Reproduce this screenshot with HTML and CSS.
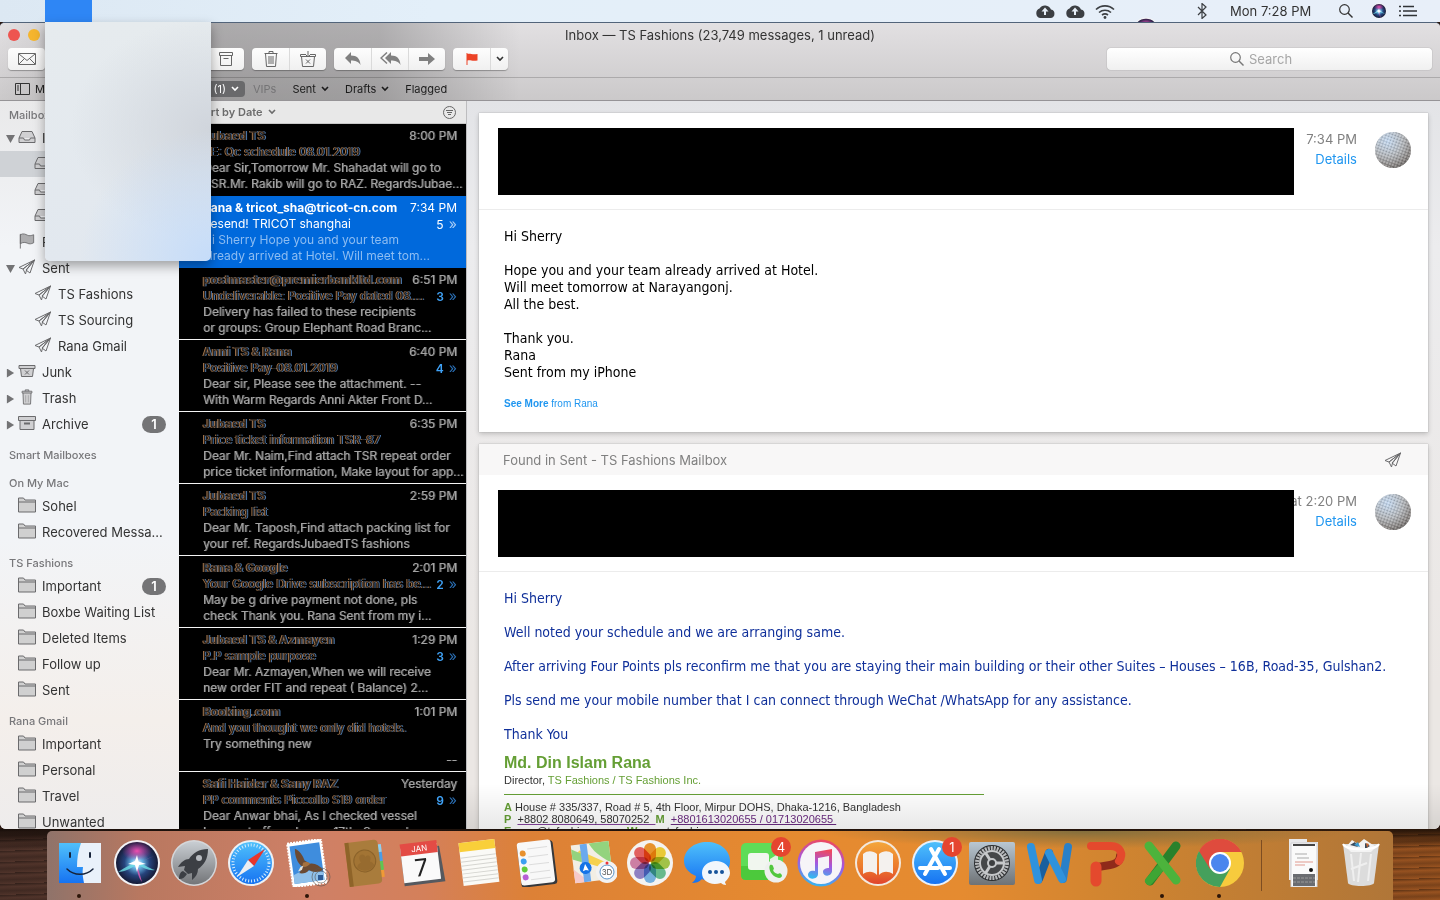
FILE: index.html
```html
<!DOCTYPE html>
<html lang="en">
  <head>
    <meta charset="UTF-8" />
    <meta name="viewport" content="width=device-width, initial-scale=1.0" />
    <title>Inbox — TS Fashions</title>
    <link rel="stylesheet" href="styles.css">
  </head>
  <body>
    <!-- Shared icons -->
    <svg class="sprite" aria-hidden="true">
      <defs>
        <linearGradient id="g-blue" x1="0" y1="0" x2="0" y2="1"><stop offset="0" stop-color="#4fc0fb" /><stop offset="1" stop-color="#1673f2" /></linearGradient>
        <linearGradient id="g-silver" x1="0" y1="0" x2="0" y2="1"><stop offset="0" stop-color="#c9ced3" /><stop offset="1" stop-color="#737578" /></linearGradient>
        <linearGradient id="g-orange" x1="0" y1="0" x2="0" y2="1"><stop offset="0" stop-color="#f3a63a" /><stop offset=".6" stop-color="#ec7a2c" /><stop offset="1" stop-color="#e0442c" /></linearGradient>
        <linearGradient id="g-note" x1=".6" y1="0" x2=".4" y2="1"><stop offset="0" stop-color="#f0485c" /><stop offset=".5" stop-color="#a457e0" /><stop offset="1" stop-color="#35b6f0" /></linearGradient>
        <linearGradient id="g-gear" x1="0" y1="0" x2="0" y2="1"><stop offset="0" stop-color="#b9c7d2" /><stop offset="1" stop-color="#6e7275" /></linearGradient>
        <radialGradient id="g-siri" cx=".5" cy=".5" r=".5"><stop offset="0" stop-color="#fff" /><stop offset=".25" stop-color="#69b7e6" /><stop offset=".6" stop-color="#26437c" /><stop offset="1" stop-color="#161a35" /></radialGradient>
        <radialGradient id="g-pink" cx=".5" cy=".5" r=".5"><stop offset="0" stop-color="#f04fb0" /><stop offset="1" stop-color="#c02f8c" stop-opacity="0" /></radialGradient>
        <radialGradient id="g-ball" cx=".35" cy=".25" r=".85"><stop offset="0" stop-color="#c3daf4" /><stop offset=".5" stop-color="#b0b4b9" /><stop offset=".8" stop-color="#85817f" /><stop offset="1" stop-color="#4f4b49" /></radialGradient>
        <pattern id="dimples" width="3" height="3" patternUnits="userSpaceOnUse" patternTransform="rotate(20)">
          <circle cx="1" cy="1" r=".9" fill="#fff" fill-opacity=".4" /><circle cx="2.200" cy="2.200" r=".8" fill="#333" fill-opacity=".35" />
        </pattern>
      </defs>
      <symbol id="i-tray" viewBox="0 0 18 14"><path d="M1 8l3-6.500h10L17 8v4.500H1zM1 8h4.500l1 2h5l1-2H17" fill="#d0d0d2" stroke="#6b6b6d" stroke-linejoin="round" /></symbol>
      <symbol id="i-flag" viewBox="0 0 18 18"><path d="M1.500 1v16.500M1.500 2c3-2 6-.500 8 .500s4 .500 7-.500v9c-3 1.500-5 1.500-7 .500s-5-1.500-8 .500z" fill="#adadaf" stroke="#6b6b6d" /></symbol>
      <symbol id="i-plane" viewBox="0 0 18 16"><path d="M16.500 1L1 8.500l4 1.500zM16.500 1L12 14l-4-3zM16.500 1L5 10l2.500 5L8.500 11z" fill="none" stroke="#6b6b6d" stroke-linejoin="round" /></symbol>
      <symbol id="i-junk" viewBox="0 0 18 14"><path d="M1 1.500h16v3H1zM2.500 4.500l1 8h11l1-8" fill="#d0d0d2" stroke="#6b6b6d" /><path d="M7 6.500l4 4M11 6.500l-4 4" stroke="#6b6b6d" /></symbol>
      <symbol id="i-trash" viewBox="0 0 14 18"><path d="M5 2.500v-1.500h4v1.500M1.500 2.500h11v2h-11zM2.500 4.500l.5 12.500h8l.5-12.500" fill="#d0d0d2" stroke="#6b6b6d" stroke-linejoin="round" /><path d="M5.500 7v8M8.500 7v8" stroke="#a5a5a7" /></symbol>
      <symbol id="i-archive" viewBox="0 0 18 14"><path d="M2 4.500h14v9H2zM.5.500h17v4H.5z" fill="#d0d0d2" stroke="#6b6b6d" /><path d="M6 7.500h6" stroke="#6b6b6d" stroke-width="2" /></symbol>
      <symbol id="i-folder" viewBox="0 0 18 15"><path d="M.5 14.500V.5h5l1.500 2h10.500v12zM.5 4.500h17" fill="#d0d0d0" stroke="#6b6b6d" /></symbol>
      <symbol id="i-chev" viewBox="0 0 8 6"><path d="M1 1l3 3 3-3" fill="none" stroke="currentColor" stroke-width="1.600" /></symbol>
      <symbol id="i-cloud" viewBox="0 0 20 14"><path d="M5 14a5 5 0 0 1-.5-9.500A6.500 6.500 0 0 1 16 5.500a4.300 4.300 0 0 1-.500 8.500z" fill="#3c3f43" /><path d="M10 3.500L6.500 7.500H9v3.500h2V7.500h2.500z" fill="#e8f0f8" /></symbol>
      <symbol id="i-search" viewBox="0 0 14 14"><circle cx="5.500" cy="5.500" r="4.800" fill="none" stroke="currentColor" stroke-width="1.200" /><path d="M9 9l4.500 4.500" stroke="currentColor" stroke-width="1.400" /></symbol>
      <symbol id="i-siri" viewBox="0 0 48 48">
        <circle cx="24" cy="24" r="23" fill="#f3f3f6" /><circle cx="24" cy="24" r="21" fill="url(#g-siri)" />
        <ellipse cx="24" cy="12" rx="15" ry="10" fill="url(#g-pink)" />
        <path d="M5 33c8-5 14-9 19-9 6 0 11 5 18 7-6 1-12-2-18-6-5 4-12 8-19 8z" fill="#6ee0e6" opacity=".8" />
        <path d="M41 17c-7 3-12 5-17 8l5 18c-4-5-5-12-6-18z" fill="#e65ab4" opacity=".8" />
        <path d="M24 16l1.500 6.500L33 25l-7 1-2 7-2-7-7-1 7-3z" fill="#fff" />
      </symbol>
      <symbol id="i-ball" viewBox="0 0 36 36"><circle cx="18" cy="18" r="18" fill="url(#g-ball)" /><circle cx="18" cy="18" r="18" fill="url(#dimples)" /></symbol>
    </svg>

    <!-- Menu bar -->
    <header class="menubar">
      <button class="menu-open" type="button" aria-label="Menu"></button>
      <div class="status">
        <svg class="st-cloud"><use href="#i-cloud" /></svg>
        <svg class="st-cloud"><use href="#i-cloud" /></svg>
        <svg class="st-wifi" viewBox="0 0 20 15"><path d="M1 5.500a13 13 0 0 1 18 0M4 8.500a9 9 0 0 1 12 0M7 11a5 5 0 0 1 6 0" fill="none" stroke="#3c3f43" stroke-width="1.600" /><circle cx="10" cy="13.500" r="1.400" fill="#3c3f43" /></svg>
        <svg class="st-rising"><use href="#i-siri" /></svg>
        <svg class="st-bt" viewBox="0 0 11 16"><path d="M1 4l8 8-4 3.500V.5L9 4l-8 8" fill="none" stroke="#3c3f43" stroke-width="1.200" /></svg>
        <time class="clock">Mon 7:28 PM</time>
        <svg class="st-search"><use href="#i-search" /></svg>
        <svg class="st-siri"><use href="#i-siri" /></svg>
        <svg class="st-list" viewBox="0 0 18 12"><path d="M0 1.500h2M4 1.500h11M0 6h2M4 6h14M0 10.500h2M4 10.500h14" stroke="#2f3236" stroke-width="1.600" /></svg>
      </div>
    </header>
    <div class="dropdown"></div>

    <!-- Mail window -->
    <main class="window">
      <div class="chrome">
        <div class="titlebar">
          <button class="light red" type="button" aria-label="Close"></button>
          <button class="light amber" type="button" aria-label="Minimize"></button>
          <h1>Inbox — TS Fashions (23,749 messages, 1 unread)</h1>
        </div>
        <div class="toolbar">
          <div class="tool-left">
            <div class="group"><button type="button" aria-label="Get mail"><svg width="18" height="12" viewBox="0 0 18 12"><path d="M.5.500h17v11H.5zM1 1l8 6.500L17 1M1 11l5.500-5.500M17 11l-5.500-5.500" fill="none" stroke="#666" /></svg></button></div>
            <div class="group"><button type="button" aria-label="Archive"><svg width="14" height="14" viewBox="0 0 14 14"><path d="M.5.500h13v3H.5zM1.500 3.500v10h11v-10M4.500 6.500h5" fill="none" stroke="#666" /></svg></button></div>
          </div>
          <div class="group">
            <button type="button" aria-label="Delete"><svg width="14" height="16" viewBox="0 0 14 16"><path d="M5 2.500V.5h4v2M.5 2.500h13M1.500 2.500l1 13h9l1-13M5 5v8M7 5v8M9 5v8" fill="none" stroke="#666" /></svg></button>
            <button type="button" aria-label="Junk"><svg width="16" height="16" viewBox="0 0 16 16"><path d="M6 3.500H.5v2h15v-2H10M1.500 5.500l1 10h11l1-10M8 0v6M6 4l2 2 2-2M6 8.500l4 4M10 8.500l-4 4" fill="none" stroke="#666" /></svg></button>
          </div>
          <div class="group">
            <button type="button" aria-label="Reply"><svg width="16" height="13" viewBox="0 0 16 13"><path d="M6 0v3.500c6 0 9 3 9.500 9.500C13.500 9.500 10 8.500 6 8.500V12L0 6z" fill="#808080" /></svg></button>
            <button type="button" aria-label="Reply all"><svg width="21" height="13" viewBox="0 0 21 13"><path d="M11 0v3.500c6 0 9 3 9.500 9.500-2-3.500-5.500-4.500-9.500-4.500V12L5 6z" fill="#808080" /><path d="M7 .5L1 6l6 5.500" fill="none" stroke="#808080" stroke-width="1.500" /></svg></button>
            <button type="button" aria-label="Forward"><svg width="16" height="12" viewBox="0 0 16 12"><path d="M9 0v4H0v4h9v4l7-6z" fill="#808080" /></svg></button>
          </div>
          <div class="group flagger">
            <button type="button" aria-label="Flag"><svg width="12" height="12" viewBox="0 0 12 12"><path d="M.5 0h1v1c3-1 4 1 10 0v6.500c-6 1-7-1-10 0V12h-1z" fill="#ec4327" /></svg></button>
            <button type="button" aria-label="Flag colour"><svg width="8" height="6"><use href="#i-chev" /></svg></button>
          </div>
          <label class="search">
            <svg width="14" height="14"><use href="#i-search" /></svg>
            <input type="search" placeholder="Search" aria-label="Search" />
          </label>
        </div>
        <nav class="favorites">
          <div class="fav-left">
            <a href="#"><svg width="15" height="12" viewBox="0 0 15 12"><path d="M.5.500h14v11H.5zM5.500.500v11M2 3h2M2 5h2M2 7h2" fill="none" stroke="#333" /></svg> Mailboxes</a>
            <a class="active" href="#">Inbox (1) <svg width="8" height="6"><use href="#i-chev" /></svg></a>
          </div>
          <a class="dim" href="#">VIPs</a>
          <a href="#">Sent <svg width="8" height="6"><use href="#i-chev" /></svg></a>
          <a href="#">Drafts <svg width="8" height="6"><use href="#i-chev" /></svg></a>
          <a href="#">Flagged</a>
        </nav>
      </div>

      <div class="panes">
        <nav class="sidebar">
          <h2>Mailboxes</h2>
          <a class="top open" href="#"><svg><use href="#i-tray" /></svg>Inbox</a>
          <a class="sub selected" href="#"><svg><use href="#i-tray" /></svg>TS Fashions</a>
          <a class="sub" href="#"><svg><use href="#i-tray" /></svg>TS Sourcing</a>
          <a class="sub" href="#"><svg><use href="#i-tray" /></svg>Rana Gmail</a>
          <a class="top" href="#"><svg><use href="#i-flag" /></svg>Flagged</a>
          <a class="top open" href="#"><svg><use href="#i-plane" /></svg>Sent</a>
          <a class="sub" href="#"><svg><use href="#i-plane" /></svg>TS Fashions</a>
          <a class="sub" href="#"><svg><use href="#i-plane" /></svg>TS Sourcing</a>
          <a class="sub" href="#"><svg><use href="#i-plane" /></svg>Rana Gmail</a>
          <a class="top shut" href="#"><svg><use href="#i-junk" /></svg>Junk</a>
          <a class="top shut" href="#"><svg><use href="#i-trash" /></svg>Trash</a>
          <a class="top shut" href="#"><svg><use href="#i-archive" /></svg>Archive<span class="count">1</span></a>
          <h2>Smart Mailboxes</h2>
          <h2>On My Mac</h2>
          <a class="top" href="#"><svg><use href="#i-folder" /></svg>Sohel</a>
          <a class="top" href="#"><svg><use href="#i-folder" /></svg>Recovered Messa...</a>
          <h2>TS Fashions</h2>
          <a class="top" href="#"><svg><use href="#i-folder" /></svg>Important<span class="count">1</span></a>
          <a class="top" href="#"><svg><use href="#i-folder" /></svg>Boxbe Waiting List</a>
          <a class="top" href="#"><svg><use href="#i-folder" /></svg>Deleted Items</a>
          <a class="top" href="#"><svg><use href="#i-folder" /></svg>Follow up</a>
          <a class="top" href="#"><svg><use href="#i-folder" /></svg>Sent</a>
          <h2>Rana Gmail</h2>
          <a class="top" href="#"><svg><use href="#i-folder" /></svg>Important</a>
          <a class="top" href="#"><svg><use href="#i-folder" /></svg>Personal</a>
          <a class="top" href="#"><svg><use href="#i-folder" /></svg>Travel</a>
          <a class="top" href="#"><svg><use href="#i-folder" /></svg>Unwanted</a>
        </nav>

        <section class="list">
          <div class="sort">
            <button type="button">Sort by Date <svg width="8" height="6"><use href="#i-chev" /></svg></button>
            <button type="button" aria-label="Filter"><svg width="13" height="13" viewBox="0 0 13 13"><circle cx="6.500" cy="6.500" r="6" fill="none" stroke="#666" /><path d="M3 4.500h7M4 6.500h5M5 8.500h3" stroke="#666" /></svg></button>
          </div>
          <ul class="messages">
            <li>
              <div class="row"><b class="from">Jubaed TS</b><time>8:00 PM</time></div>
              <div class="row"><span class="subject">RE: Qc schedule 08.01.2019</span></div>
              <p>Dear Sir,Tomorrow Mr. Shahadat will go to<br>TSR.Mr. Rakib will go to RAZ. RegardsJubae...</p>
            </li>
            <li class="current">
              <div class="row"><b class="from">Rana &amp; tricot_sha@tricot-cn.com</b><time>7:34 PM</time></div>
              <div class="row"><span class="subject">Resend! TRICOT shanghai</span><span class="thread">5 <i>»</i></span></div>
              <p>Hi Sherry Hope you and your team<br>already arrived at Hotel. Will meet tom...</p>
            </li>
            <li>
              <div class="row"><b class="from">postmaster@premierbankltd.com</b><time>6:51 PM</time></div>
              <div class="row"><span class="subject">Undeliverable: Positive Pay dated 08....</span><span class="thread">3 <i>»</i></span></div>
              <p>Delivery has failed to these recipients<br>or groups: Group Elephant Road Branc...</p>
            </li>
            <li>
              <div class="row"><b class="from">Anni TS &amp; Rana</b><time>6:40 PM</time></div>
              <div class="row"><span class="subject">Positive Pay-08.01.2019</span><span class="thread">4 <i>»</i></span></div>
              <p>Dear sir, Please see the attachment. --<br>With Warm Regards Anni Akter Front D...</p>
            </li>
            <li>
              <div class="row"><b class="from">Jubaed TS</b><time>6:35 PM</time></div>
              <div class="row"><span class="subject">Price ticket information TSR-87</span></div>
              <p>Dear Mr. Naim,Find attach TSR repeat order<br>price ticket information, Make layout for app...</p>
            </li>
            <li>
              <div class="row"><b class="from">Jubaed TS</b><time>2:59 PM</time></div>
              <div class="row"><span class="subject">Packing list</span></div>
              <p>Dear Mr. Taposh,Find attach packing list for<br>your ref. RegardsJubaedTS fashions</p>
            </li>
            <li>
              <div class="row"><b class="from">Rana &amp; Google</b><time>2:01 PM</time></div>
              <div class="row"><span class="subject">Your Google Drive subscription has be...</span><span class="thread">2 <i>»</i></span></div>
              <p>May be g drive payment not done, pls<br>check Thank you. Rana Sent from my i...</p>
            </li>
            <li>
              <div class="row"><b class="from">Jubaed TS &amp; Azmayen</b><time>1:29 PM</time></div>
              <div class="row"><span class="subject">P.P sample purpose</span><span class="thread">3 <i>»</i></span></div>
              <p>Dear Mr. Azmayen,When we will receive<br>new order FIT and repeat ( Balance) 2...</p>
            </li>
            <li>
              <div class="row"><b class="from">Booking.com</b><time>1:01 PM</time></div>
              <div class="row"><span class="subject">And you thought we only did hotels.</span></div>
              <p>Try something new</p>
              <p class="tail">--</p>
            </li>
            <li>
              <div class="row"><b class="from">Safi Haider &amp; Sany RAZ</b><time>Yesterday</time></div>
              <div class="row"><span class="subject">PP comments Piccollo S19 order</span><span class="thread">9 <i>»</i></span></div>
              <p>Dear Anwar bhai, As I checked vessel<br>have cut off on Jan on 17th, So we do</p>
            </li>
          </ul>
        </section>

        <section class="reader">
          <article class="card">
            <div class="card-head">
              <div class="redacted"></div>
              <div class="meta"><time>7:34 PM</time><a href="#">Details</a></div>
              <svg class="avatar"><use href="#i-ball" /></svg>
            </div>
            <div class="mail">
              <p>Hi Sherry</p>
              <p>Hope you and your team already arrived at Hotel.<br>Will meet tomorrow at Narayangonj.<br>All the best.</p>
              <p>Thank you.<br>Rana<br>Sent from my iPhone</p>
              <a class="more" href="#"><b>See More</b> from Rana</a>
            </div>
          </article>

          <article class="card">
            <div class="found">Found in Sent - TS Fashions Mailbox <svg width="18" height="16"><use href="#i-plane" /></svg></div>
            <div class="card-head">
              <div class="redacted"></div>
              <div class="meta"><time>at 2:20 PM</time><a href="#">Details</a></div>
              <svg class="avatar"><use href="#i-ball" /></svg>
            </div>
            <div class="mail navy">
              <p>Hi Sherry</p>
              <p>Well noted your schedule and we are arranging same.</p>
              <p>After arriving Four Points pls reconfirm me that you are staying their main building or their other Suites – Houses – 16B, Road-35, Gulshan2.</p>
              <p>Pls send me your mobile number that I can connect through WeChat /WhatsApp for any assistance.</p>
              <p>Thank You</p>
              <div class="signature">
                <h3>Md. Din Islam Rana</h3>
                <div class="role">Director, <span>TS Fashions / TS Fashions Inc.</span></div>
                <div class="address"><b>A</b> House # 335/337, Road # 5, 4th Floor, Mirpur DOHS, Dhaka-1216, Bangladesh</div>
                <div><b>P</b>&nbsp; <u>+8802 8080649, 58070252&nbsp;&nbsp;</u><b>M</b>&nbsp; <a href="#">+8801613020655 / 01713020655&nbsp;</a></div>
                <div><b>E</b> rana@tsfashions.com&nbsp; <b>W</b> www.tsfashions.com</div>
              </div>
            </div>
          </article>
        </section>
      </div>
    </main>

    <!-- Dock -->
    <footer class="desktop">
      <nav class="dock">
        <button class="app running" type="button" aria-label="Finder"><svg viewBox="0 0 48 48"><path d="M3 4h42v40H3z" fill="url(#g-blue)" /><path d="M25 4h20v40H28c-1-5-2-10-1-16h-6c0-8 1-16 4-24z" fill="#e9f1fa" /><path d="M14 14v4M34 14v4" stroke="#16233a" stroke-width="2" stroke-linecap="round" /><path d="M11 30c7 7 19 7 26 0" fill="none" stroke="#16233a" stroke-width="1.500" stroke-linecap="round" /></svg></button>
        <button class="app" type="button" aria-label="Siri"><svg><use href="#i-siri" /></svg></button>
        <button class="app" type="button" aria-label="Launchpad"><svg viewBox="0 0 48 48"><circle cx="24" cy="24" r="23" fill="#d5d7da" /><circle cx="24" cy="24" r="21.500" fill="url(#g-silver)" /><path d="M38 10c-9 0-15 4-19 10-4 0-8 3-11 8l7-1-1 4 4 4 4-1 0 7c4-3 6-7 6-11 6-4 10-10 10-20z" fill="#3c3f44" /><circle cx="29" cy="19" r="3" fill="#b9bdc2" /><path d="M13 32c-3 1-4 4-4 8 4 0 6-2 8-5z" fill="#3c3f44" /></svg></button>
        <button class="app" type="button" aria-label="Safari"><svg viewBox="0 0 48 48"><circle cx="24" cy="24" r="23" fill="#eef1f4" /><circle cx="24" cy="24" r="21" fill="url(#g-blue)" /><circle cx="24" cy="24" r="18" fill="none" stroke="#d6ecfb" stroke-width="3" stroke-dasharray="1 2" /><path d="M38 10L21 21l6 6z" fill="#e6362d" /><path d="M10 38l11-17 6 6z" fill="#eceef2" /></svg></button>
        <button class="app running" type="button" aria-label="Mail"><svg viewBox="0 0 48 48"><g transform="rotate(-8 24 24)"><path d="M6 2h34v44H6z" fill="#fff" stroke="#fff" stroke-width="2" stroke-dasharray="2 1" /><path d="M8 5h30v38H8z" fill="#3f8ddd" /><path d="M8 34c10-4 20-2 30 1v8H8z" fill="#8fc0ea" /><path d="M13 8c4 2 7 8 8 13l5 4c5 0 9 3 12 8-5 2-11 1-14-2-3 3-6 3-10 2l4-6c-5-5-6-12-5-19z" fill="#6b4a33" /><path d="M19 23c3-1 6 0 7 2-2 2-5 3-8 2z" fill="#a5713f" /><path d="M16 27l3-1-2 4-4 1z" fill="#e9e4da" /></g><circle cx="37" cy="38" r="9" fill="none" stroke="#5a5550" opacity=".6" /><circle cx="37" cy="38" r="6" fill="none" stroke="#5a5550" opacity=".6" /><path d="M34 36h5v5h-5z" fill="#2c5b96" /></svg></button>
        <button class="app" type="button" aria-label="Contacts"><svg viewBox="0 0 48 48"><g transform="rotate(-7 24 24)"><path d="M38 7h4v8h-4z" fill="#8fd0f0" /><path d="M38 15h4v9h-4z" fill="#4a9de8" /><path d="M38 24h4v9h-4z" fill="#61c454" /><path d="M38 33h4v7h-4z" fill="#f09a36" /><path d="M6 2h29q4 0 4 4v36q0 4-4 4H6z" fill="#a97c3c" /><path d="M6 2h4v44H6z" fill="#8f6429" /><circle cx="24" cy="22" r="11" fill="#a27434" stroke="#8a622a" /><path d="M16 28c0-4 3-4 4-5-4-8 4-10 5-5 3-3 7 0 4 5 2 1 4 2 4 5-4 5-12 5-17 0z" fill="#976b2f" /></g></svg></button>
        <button class="app" type="button" aria-label="Calendar"><svg viewBox="0 0 48 48"><g transform="rotate(-7 24 24)"><path d="M4 9h39l2 36H4z" fill="#55595f" /><path d="M4 6h37v36H4z" fill="#fafafa" /><path d="M4 3h37v12H4z" fill="#e34b45" /><text x="23" y="12" class="jan">JAN</text><text x="23" y="37" class="day">7</text></g></svg></button>
        <button class="app" type="button" aria-label="Notes"><svg viewBox="0 0 48 48"><g transform="rotate(-7 24 24)"><path d="M6 2h36v43H6z" fill="#fafaf6" /><path d="M6 2h36v9H6z" fill="#f9cf3a" /><path d="M6 17h36M6 21h36M6 25h36M6 29h36M6 33h36M6 37h36M6 41h36" stroke="#d5d5d0" /></g></svg></button>
        <button class="app" type="button" aria-label="Reminders"><svg viewBox="0 0 48 48"><g transform="rotate(-7 24 24)"><rect x="7" y="3" width="36" height="44" rx="3" fill="#35383c" /><rect x="7" y="2" width="34" height="43" rx="3" fill="#f8f8f8" /><circle cx="12" cy="13" r="3" fill="#e8912f" /><circle cx="12" cy="21" r="3" fill="#3c9ff0" /><circle cx="12" cy="29" r="3" fill="#61cc3c" /><circle cx="12" cy="37" r="3" fill="#b75fd6" /><path d="M17 9h20M17 17h20M17 25h20M17 33h20M17 40h20" stroke="#dcdcdc" /></g></svg></button>
        <button class="app" type="button" aria-label="Maps"><svg viewBox="0 0 48 48"><g transform="rotate(-7 24 24)"><path d="M4 4h38v38H4z" fill="#f2eee4" /><path d="M22 4h20v22c-6-6-14-9-20-22z" fill="#93d37e" /><path d="M4 17l38 17v-6L12 10z" fill="#f6d14e" /><path d="M4 28l14 14H4z" fill="#f6c9c9" /><path d="M4 8l9 5v9l-9-4z" fill="#93d37e" /><path d="M13 4h7v38h-7z" fill="#6aa9ee" /><circle cx="16" cy="28" r="6" fill="#1573e6" /><path d="M16 24l3 7-3-1-3 1z" fill="#fff" /></g><circle cx="38" cy="33" r="11" fill="#f2f2f2" /><circle cx="38" cy="33" r="7" fill="#fff" stroke="#5b94c9" /><text x="38" y="36" class="threed">3D</text><circle cx="38" cy="24" r="1.500" fill="#e33" /></svg></button>
        <button class="app" type="button" aria-label="Photos"><svg viewBox="0 0 48 48"><circle cx="24" cy="24" r="23" fill="#f4f3f1" /><g class="petals"><rect x="18" y="4" width="12" height="19" rx="6" fill="#f2992e" /><rect x="18" y="4" width="12" height="19" rx="6" fill="#f4d33b" transform="rotate(45 24 24)" /><rect x="18" y="4" width="12" height="19" rx="6" fill="#a9cc4b" transform="rotate(90 24 24)" /><rect x="18" y="4" width="12" height="19" rx="6" fill="#6cc294" transform="rotate(135 24 24)" /><rect x="18" y="4" width="12" height="19" rx="6" fill="#7ab8ea" transform="rotate(180 24 24)" /><rect x="18" y="4" width="12" height="19" rx="6" fill="#9686cc" transform="rotate(225 24 24)" /><rect x="18" y="4" width="12" height="19" rx="6" fill="#d685ad" transform="rotate(270 24 24)" /><rect x="18" y="4" width="12" height="19" rx="6" fill="#ec6663" transform="rotate(315 24 24)" /></g></svg></button>
        <button class="app" type="button" aria-label="Messages"><svg viewBox="0 0 48 48"><path d="M24 3c13 0 23 8 23 19S37 41 24 41c-2 0-4 0-5-1-3 3-6 4-10 4 2-2 4-4 4-7C6 34 1 29 1 22 1 11 11 3 24 3z" fill="url(#g-blue)" /><path d="M33 22c8 0 14 5 14 12 0 3-2 6-5 9 0 1 1 2 1 3-2 0-4-1-5-2-11 3-19-2-19-10 0-7 6-12 14-12z" fill="#f1f6fc" /><circle cx="27" cy="33" r="2" fill="#17539b" /><circle cx="33" cy="33" r="2" fill="#17539b" /><circle cx="39" cy="33" r="2" fill="#17539b" /></svg></button>
        <button class="app" type="button" aria-label="FaceTime"><svg viewBox="0 0 48 48"><rect x="1" y="4" width="42" height="37" rx="5" fill="#5fdc57" /><path d="M1 27h42v9q0 5-5 5H6q-5 0-5-5z" fill="#4cc93c" /><rect x="8" y="14" width="21" height="17" rx="3" fill="#f1f6ef" /><path d="M30 20l8-5v15l-8-5z" fill="#e2f3de" /><circle cx="36" cy="32" r="11.500" fill="#eef0ee" /><path d="M30 26c3-1 3 1 4 4-2 1 0 4 4 5 2-2 4 0 4 2-1 3-5 2-8 0s-6-8-4-11z" fill="#52c73e" /></svg><span class="badge">4</span></button>
        <button class="app" type="button" aria-label="iTunes"><svg viewBox="0 0 48 48"><circle cx="24" cy="24" r="23.500" fill="url(#g-note)" /><circle cx="24" cy="24" r="21" fill="#f6f4f8" /><path d="M18 13l17-3v22c0 6-9 6-9 1 0-3 3-4 6-4V17l-11 2v16c0 6-10 6-10 1 0-4 4-5 7-4z" fill="url(#g-note)" /></svg></button>
        <button class="app" type="button" aria-label="iBooks"><svg viewBox="0 0 48 48"><circle cx="24" cy="24" r="23" fill="#f3e9de" /><circle cx="24" cy="24" r="21" fill="url(#g-orange)" /><path d="M9 15c5-4 10-3 14 0v21c-4-4-9-4-14-1zM25 15c4-3 9-4 14 0v20c-5-3-10-3-14 1z" fill="#f4f1ee" /></svg></button>
        <button class="app" type="button" aria-label="App Store"><svg viewBox="0 0 48 48"><circle cx="24" cy="24" r="23" fill="#e9f1fa" /><circle cx="24" cy="24" r="21" fill="url(#g-blue)" /><path d="M28 10L14 35M20 10l14 25M9 29h18M33 29h6" stroke="#fff" stroke-width="4" stroke-linecap="round" /></svg><span class="badge">1</span></button>
        <button class="app" type="button" aria-label="System Preferences"><svg viewBox="0 0 48 48"><rect x="1" y="3" width="46" height="43" rx="2" fill="url(#g-gear)" /><circle cx="24" cy="24" r="18" fill="#2b2d2f" /><circle cx="24" cy="24" r="15" fill="none" stroke="#b7b9bb" stroke-width="4" stroke-dasharray="2 1" /><circle cx="24" cy="24" r="12" fill="#454749" stroke="#c6c8ca" stroke-width="2" /><path d="M24 24h13M24 24L17 13M24 24l-7 11" stroke="#c6c8ca" stroke-width="3" /><circle cx="24" cy="24" r="4" fill="#3c3e40" stroke="#c6c8ca" stroke-width="2" /></svg></button>
        <button class="app" type="button" aria-label="Word"><svg viewBox="0 0 48 48"><path d="M43 8l-5 32" stroke="#2a80c8" stroke-width="8" stroke-linecap="round" /><path d="M14 40l10-26" stroke="#1a5f9e" stroke-width="8" stroke-linecap="round" /><path d="M24 14l13 26M6 8l7 33" stroke="#2f92dc" stroke-width="8" stroke-linecap="round" /></svg></button>
        <button class="app" type="button" aria-label="PowerPoint"><svg viewBox="0 0 48 48"><path d="M38 17c0 5-4 8-10 9l-12 2" fill="none" stroke="#8f2a1a" stroke-width="8" stroke-linecap="round" /><path d="M9 7h20c9 0 13 8 8 15" fill="none" stroke="#e4492d" stroke-width="8" stroke-linecap="round" /><path d="M14 28v14" stroke="#e4492d" stroke-width="11" stroke-linecap="round" /></svg></button>
        <button class="app running" type="button" aria-label="Excel"><svg viewBox="0 0 48 48"><path d="M37 7L11 42" stroke="#29812b" stroke-width="9" stroke-linecap="round" /><path d="M24 26L10 42" stroke="#3fa534" stroke-width="8" stroke-linecap="round" /><path d="M10 7l27 34" stroke="#4cb33c" stroke-width="9" stroke-linecap="round" /></svg></button>
        <button class="app running" type="button" aria-label="Chrome"><svg viewBox="0 0 48 48"><circle cx="24" cy="24" r="24" fill="#f7cb3d" /><path d="M3 12a24 24 0 0 0 21 36l10-18-10-6z" fill="#45a05c" /><path d="M24 13h21.500a24 24 0 0 0-42.500-1l11 18z" fill="#df4b3d" /><circle cx="24" cy="24" r="11" fill="#fff" /><circle cx="24" cy="24" r="9" fill="#4a86ee" /></svg></button>
        <span class="divider"></span>
        <button class="app" type="button" aria-label="Documents"><svg viewBox="0 0 48 48"><path d="M9 0h18v3h11v38H9z" fill="#e8e8ea" /><path d="M11 4h26v44H11z" fill="#fafafa" stroke="#d0d0d4" /><path d="M13 6h22" stroke="#444" stroke-width="2" /><path d="M15 15h12M17 19h12" stroke="#aaa" /><path d="M15 23h18M15 26h10" stroke="#e09a8f" /><circle cx="31" cy="31" r="2" fill="#111" /><path d="M13 35h22v12H13z" fill="#6a6c70" /><path d="M13 39h22M13 43h22" stroke="#999" stroke-dasharray="3 1" /></svg></button>
        <button class="app" type="button" aria-label="Trash"><svg viewBox="0 0 48 48"><path d="M6 5l5 39c1 4 25 4 26 0l5-39z" fill="#dcdcdc" /><path d="M9 8l6-7 6 4 6-5 6 4 6 4-5 5H14z" fill="#f3f3f3" /><path d="M13 6l5-3 3 5zM28 4l5 3-5 3z" fill="#3b4a5a" /><path d="M17 6l4-3 2 5z" fill="#3c9bd0" /><path d="M29 4l3 1-2 4z" fill="#c4652f" /><path d="M6 5c3 7 33 7 36 0" fill="none" stroke="#fff" stroke-width="2" /><path d="M14 15l3 27M24 14l-3 29M34 15l-3 27M14 30l16-6" fill="none" stroke="#efefef" stroke-width="2" /></svg></button>
      </nav>
    </footer>
  </body>
</html>
```
FILE: styles.css
```css
/* General Styles */
* {
  box-sizing: border-box;
}

body {
  margin: 0;
  height: 100vh;
  display: flex;
  flex-direction: column;
  position: relative;
  overflow: hidden;
  font-family: Inter, "Liberation Sans", sans-serif;
  font-size: 13px;
  color: #333;
  background: #2a1710;
}

h1, h2, h3, p, ul {
  margin: 0;
  padding: 0;
  font-size: inherit;
  font-weight: inherit;
}

a {
  color: inherit;
  text-decoration: none;
}

button {
  margin: 0;
  padding: 0;
  border: none;
  background: none;
  font: inherit;
  color: inherit;
}

.sprite {
  position: absolute;
  width: 0;
  height: 0;
}

/* Menu bar */
.menubar {
  flex: none;
  height: 22px;
  display: flex;
  justify-content: space-between;
  padding: 0 23px 0 45px;
  overflow: hidden;
  background: linear-gradient(90deg, #dce8f3, #e3eff9 30%, #e8eff9);
}

.menu-open {
  width: 47px;
  background: #2e86f5;
}

.status {
  display: flex;
  align-items: center;
}

.st-cloud {
  width: 20px;
  height: 14px;
  margin-right: 10px;
}

.st-wifi {
  width: 20px;
  height: 15px;
  margin-right: 17px;
}

.st-rising {
  align-self: flex-start;
  flex: none;
  width: 28px;
  height: 28px;
  margin: 17px 37px 0 0;
}

.st-bt {
  width: 11px;
  height: 16px;
  margin-right: 22px;
}

.clock {
  min-width: 86px;
  margin-right: 23px;
  white-space: nowrap;
}

.st-search {
  width: 14px;
  height: 14px;
  margin-right: 18px;
}

.st-siri {
  width: 16px;
  height: 16px;
  margin-right: 12px;
}

.st-list {
  width: 18px;
  height: 12px;
}

.dropdown {
  position: absolute;
  z-index: 2;
  left: 45px;
  top: 22px;
  width: 166px;
  height: 239px;
  border-radius: 0 0 5px 5px;
  background:
    radial-gradient(circle at 100% 100%, #c5dcf9, rgba(197, 220, 249, 0) 45%),
    radial-gradient(ellipse at 100% 45%, #d0d5dc, rgba(208, 213, 220, 0) 60%),
    linear-gradient(180deg, #e6ebee, #e2e8ef);
  box-shadow: 0 5px 12px rgba(0, 0, 0, 0.35);
}

/* Window */
.window {
  flex: 1;
  min-height: 0;
  display: flex;
  flex-direction: column;
  overflow: hidden;
  border-top: 1px solid #52647a;
  border-radius: 5px 5px 6px 6px;
  background: #ebebed;
}

.chrome {
  flex: none;
  border-bottom: 1px solid #969497;
  background:
    linear-gradient(90deg, rgba(0, 0, 0, 0) 0, rgba(0, 0, 0, 0.24) 200px, rgba(0, 0, 0, 0.22) 380px, rgba(0, 0, 0, 0) 520px),
    linear-gradient(180deg, #e2e0e2, #cbc9ca);
}

.titlebar {
  height: 23px;
  display: flex;
  align-items: center;
  gap: 8px;
  padding: 0 8px;
}

.titlebar h1 {
  flex: 1;
  margin-right: 40px;
  text-align: center;
}

.light {
  width: 12px;
  height: 12px;
  border-radius: 50%;
}

.red {
  background: #ee5550;
}

.amber {
  background: #f5b52e;
}

.toolbar {
  height: 32px;
  display: flex;
  align-items: center;
  gap: 8px;
  padding: 0 8px 6px;
  border-bottom: 1px solid rgba(0, 0, 0, 0.18);
}

.tool-left {
  width: 236px;
  display: flex;
  justify-content: space-between;
}

.group {
  display: flex;
  height: 22px;
  border-radius: 4px;
  background: linear-gradient(180deg, #fdfdfd, #f0f0f0);
  box-shadow: 0 1px 1px rgba(0, 0, 0, 0.3);
}

.group button {
  width: 37px;
  display: flex;
  align-items: center;
  justify-content: center;
}

.group button + button {
  border-left: 1px solid #dadada;
}

.flagger button + button {
  width: 18px;
}

.search {
  width: 325px;
  height: 22px;
  margin-left: auto;
  display: flex;
  align-items: center;
  justify-content: center;
  gap: 5px;
  border-radius: 4px;
  background: linear-gradient(180deg, #fff, #f0f0f0);
  box-shadow: 0 0 1px rgba(0, 0, 0, 0.5);
  color: #777;
}

.search input {
  width: 60px;
  padding: 0;
  border: none;
  outline: none;
  background: none;
  font: inherit;
}

.search input::placeholder {
  color: #a6a6a6;
}

.favorites {
  height: 22px;
  display: flex;
  align-items: center;
  gap: 16px;
  font-size: 11px;
  color: #1b1b1b;
}

.favorites a {
  display: flex;
  align-items: center;
  gap: 5px;
}

.fav-left {
  width: 245px;
  margin-right: -8px;
  padding-left: 15px;
  display: flex;
  justify-content: space-between;
}

.favorites .active {
  height: 16px;
  padding: 0 6px;
  border-radius: 4px;
  background: #69696b;
  color: #fff;
}

.favorites .dim {
  color: #757476;
}

.panes {
  flex: 1;
  min-height: 0;
  display: flex;
}

/* Sidebar */
.sidebar {
  flex: none;
  width: 179px;
  padding-top: 4px;
  overflow: hidden;
  background: linear-gradient(180deg, #e9e9ea, #f2f4f7 20%, #f2f4f7 60%, #f4efeb 85%, #eeecec);
}

.sidebar h2 {
  height: 20px;
  margin-top: 8px;
  padding-left: 9px;
  line-height: 20px;
  font-size: 11px;
  font-weight: 500;
  color: #77777a;
}

.sidebar h2:first-child {
  margin-top: 0;
}

.sidebar a {
  height: 26px;
  display: flex;
  align-items: center;
  padding: 0 13px 0 18px;
  white-space: nowrap;
}

.sidebar a.sub {
  padding-left: 34px;
}

.sidebar svg {
  flex: none;
  width: 18px;
  height: 16px;
  margin: 0 6px 2px 0;
}

.sidebar .selected {
  background: #cfd2d6;
}

.open::before,
.shut::before {
  content: "";
  width: 9px;
  height: 8px;
  margin: 2px 3px 0 -12px;
  background: #737375;
  clip-path: polygon(0 0, 100% 0, 50% 100%);
}

.shut::before {
  height: 9px;
  clip-path: polygon(10% 0, 90% 50%, 10% 100%);
}

.count {
  width: 24px;
  height: 17px;
  margin-left: auto;
  border-radius: 9px;
  background: #747476;
  color: #fff;
  font-weight: 600;
  line-height: 17px;
  text-align: center;
}

/* Message list */
.list {
  flex: none;
  width: 288px;
  overflow: hidden;
  border-right: 1px solid #bdbdbf;
}

.sort {
  height: 23px;
  display: flex;
  align-items: center;
  justify-content: space-between;
  padding: 0 10px 0 18px;
  border-bottom: 1px solid #c8c8c8;
  background: #e8e8e8;
  font-size: 11px;
  font-weight: 600;
  color: #6c6c6c;
}

.sort button {
  display: flex;
  align-items: center;
  gap: 5px;
}

.messages {
  list-style: none;
}

.messages li {
  height: 72px;
  padding: 4px 9px 0 24px;
  overflow: hidden;
  border-bottom: 1px solid #f4f4f4;
  background: #000;
  font-size: 12px;
  line-height: 16px;
  white-space: nowrap;
  color: #a3a3a3;
}

.messages li:first-child {
  border-bottom-color: #000;
}

.row {
  height: 16px;
  display: flex;
  justify-content: space-between;
}

/* fringed look of the inverted rows */
.messages time,
.messages p {
  text-shadow: 1px 0 #5c5c5c;
}

.from,
.subject {
  color: #2c241e;
  text-shadow: -1px 0 #a3744a, 1px 0 #4a78ad;
}

.from {
  font-weight: 700;
}

.thread {
  font-weight: 600;
  color: #3fa2f7;
}

.thread i {
  font-style: normal;
  font-size: 14px;
  font-weight: 400;
  color: #2a6fb5;
  margin-left: 2px;
}

.messages .tail {
  text-align: right;
}

.messages .current {
  border-bottom-color: #0069dc;
  background: #0069dc;
  color: #8dbdf2;
}

.current .from,
.current .subject,
.current time,
.current .thread {
  color: #fff;
  font-weight: 400;
  text-shadow: none;
}

.current .from {
  font-weight: 700;
}

.current .thread i {
  color: #a8cdf5;
}

.current p {
  text-shadow: none;
}

/* Reader */
.reader {
  flex: 1;
  min-width: 0;
  position: relative;
  padding: 12px 12px 0;
  overflow: hidden;
  background: linear-gradient(180deg, #e3e4e7, #ececee 20%, #ebe7e4 80%);
}

.reader::after {
  content: "";
  position: absolute;
  left: 0;
  right: 0;
  bottom: 0;
  height: 45px;
  background: linear-gradient(180deg, rgba(0, 0, 0, 0), rgba(0, 0, 0, 0.09));
  pointer-events: none;
}

.card {
  margin-bottom: 12px;
  background: #fff;
  box-shadow: 0 0 1px #999, 0 2px 5px rgba(0, 0, 0, 0.2);
}

.found {
  height: 31px;
  display: flex;
  align-items: center;
  justify-content: space-between;
  padding: 0 26px 0 24px;
  background: #f8f7f7;
  color: #808080;
}

.card-head {
  height: 97px;
  display: flex;
  padding: 15px 17px 14px 19px;
  border-bottom: 1px solid #ececec;
}

.redacted {
  flex: 1;
  background: #000;
}

.meta {
  width: 63px;
  margin: 1px 18px 0 0;
  display: flex;
  flex-direction: column;
  align-items: flex-end;
  overflow: hidden;
  line-height: 20px;
  white-space: nowrap;
  color: #808080;
}

.meta a {
  color: #1f96f0;
}

.avatar {
  width: 36px;
  height: 36px;
  margin-top: 4px;
}

.mail {
  padding: 18px 25px 22px;
  font-family: "DejaVu Sans Condensed", "Noto Sans", sans-serif;
  font-size: 14px;
  line-height: 17px;
  color: #000;
}

.mail p {
  margin-bottom: 17px;
}

.more {
  display: block;
  font-family: "Liberation Sans", sans-serif;
  font-size: 10px;
  line-height: 12px;
  color: #1f96f0;
}

.mail.navy {
  color: #10309a;
}

.signature {
  margin-top: -6px;
  font-family: "Liberation Sans", sans-serif;
  font-size: 11px;
  line-height: 12px;
  color: #333;
}

.signature h3 {
  font-size: 16px;
  font-weight: bold;
  line-height: 18px;
  color: #659f35;
}

.signature b,
.role span {
  color: #659f35;
}

.role {
  line-height: 16px;
}

.address {
  width: 480px;
  margin-top: 6px;
  padding-top: 6px;
  border-top: 1px solid #659f35;
}

.signature u {
  text-decoration-color: #84419b;
}

.signature a {
  color: #6a2a80;
  text-decoration: underline;
}

/* Dock */
.desktop {
  flex: none;
  display: flex;
  justify-content: center;
  padding: 2px 47px 0;
  background:
    linear-gradient(180deg, rgba(15, 8, 4, 0.8), rgba(15, 8, 4, 0) 20px),
    repeating-linear-gradient(178deg, rgba(0, 0, 0, 0.35) 0, rgba(0, 0, 0, 0) 3px, rgba(0, 0, 0, 0.2) 7px, rgba(0, 0, 0, 0) 11px),
    linear-gradient(90deg, #4f332a, #70402c 50%, #995320);
}

.dock {
  flex: 1;
  height: 69px;
  display: flex;
  justify-content: center;
  padding: 0 4px;
  border-radius: 5px 5px 0 0;
  background:
    radial-gradient(ellipse at 77% 0, rgba(110, 105, 65, 0.8), rgba(110, 105, 65, 0) 18%),
    linear-gradient(90deg, #8f736a, #b97860 7%, #cf8066 20%, #d4805a 28%, #dd8136 36%, #e58a30 55%, #e58b30 68%, #cf8430 80%, #b07638);
}

.app {
  flex: none;
  width: 57px;
  height: 69px;
  position: relative;
  display: flex;
  justify-content: center;
  padding-top: 8px;
}

.app svg {
  width: 48px;
  height: 48px;
}

.petals rect {
  mix-blend-mode: multiply;
}

.running::after {
  content: "";
  position: absolute;
  left: 26px;
  bottom: 2px;
  width: 4px;
  height: 4px;
  border-radius: 50%;
  background: #2c1508;
}

.badge {
  position: absolute;
  top: 6px;
  right: 1px;
  width: 20px;
  height: 20px;
  border-radius: 50%;
  background: #e5452f;
  color: #fff;
  line-height: 20px;
}

.divider {
  width: 1px;
  height: 51px;
  margin: 9px 13px 0;
  background: #7d4d22;
}

.jan {
  font-size: 8px;
  fill: #fff;
  text-anchor: middle;
}

.day {
  font-size: 24px;
  fill: #222;
  text-anchor: middle;
}

.threed {
  font-size: 8px;
  fill: #555;
  text-anchor: middle;
}
```
